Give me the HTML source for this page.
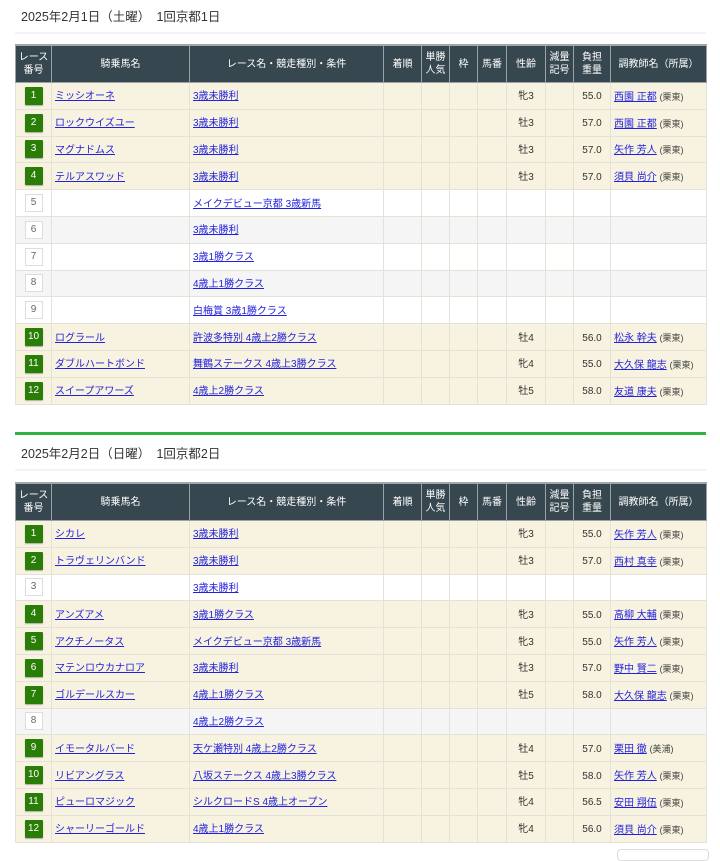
<!DOCTYPE html><html><head><meta charset="utf-8"><style>
body{margin:0;background:#fff;font-family:"Liberation Sans","Noto Sans CJK JP",sans-serif;color:#333;width:720px;height:855px;overflow:hidden;position:relative}
.t{position:absolute;left:21px;font-size:12.5px;color:#333}
.sep{position:absolute;left:15px;width:691px;height:2px;background:#f3f3f3}
table{position:absolute;left:15px;width:691px;border-collapse:collapse;table-layout:fixed;font-size:10px}
th{background:#37474f;color:#fff;font-weight:normal;height:36px;border:1px solid #9aa3a7;border-top:2px solid #a0a8ab;padding:0;line-height:13px;font-size:10px}
tr.h,tr.w,tr.g{height:26.8px}
td{border:1px solid #e3e1d8;padding:3px 3px 0;white-space:nowrap;overflow:hidden;vertical-align:middle;line-height:14px}
td.n{padding:0}
tr.h td{background:#f7f3e0}
tr.w td{background:#fff}
tr.g td{background:#f5f5f5}
td.n{text-align:center}
.b{display:inline-block;vertical-align:middle;width:18px;height:18px;line-height:18px;background:#2a7d06;color:#fff;border-radius:1px;box-shadow:0 1px 1px #aaa;font-size:10px;text-align:center}
.e{display:inline-block;vertical-align:middle;width:18px;height:18px;line-height:16px;background:#fff;color:#666;border:1px solid #ddd;font-size:10px;text-align:center;box-sizing:border-box}
a{color:#2222dd;text-decoration:underline}
td.c{text-align:center}
.s{font-size:9px;color:#444}
</style></head><body>
<div class="t" style="top:6px">2025年2月1日（土曜）　1回京都1日</div>
<div class="sep" style="top:32px"></div>
<table style="top:44px">
<colgroup><col style="width:36px"><col style="width:138px"><col style="width:194px"><col style="width:38px"><col style="width:28px"><col style="width:28px"><col style="width:29px"><col style="width:39px"><col style="width:28px"><col style="width:37px"><col style="width:96px"></colgroup>
<tr><th>レース<br>番号</th><th>騎乗馬名</th><th>レース名・競走種別・条件</th><th>着順</th><th>単勝<br>人気</th><th>枠</th><th>馬番</th><th>性齢</th><th>減量<br>記号</th><th>負担<br>重量</th><th>調教師名（所属）</th></tr>
<tr class="h"><td class="n"><span class="b">1</span></td><td><a>ミッシオーネ</a></td><td><a>3歳未勝利</a></td><td></td><td></td><td></td><td></td><td class="c">牝3</td><td></td><td class="c">55.0</td><td><a>西園 正都</a> <span class="s">(栗東)</span></td></tr>
<tr class="h"><td class="n"><span class="b">2</span></td><td><a>ロックウイズユー</a></td><td><a>3歳未勝利</a></td><td></td><td></td><td></td><td></td><td class="c">牡3</td><td></td><td class="c">57.0</td><td><a>西園 正都</a> <span class="s">(栗東)</span></td></tr>
<tr class="h"><td class="n"><span class="b">3</span></td><td><a>マグナドムス</a></td><td><a>3歳未勝利</a></td><td></td><td></td><td></td><td></td><td class="c">牡3</td><td></td><td class="c">57.0</td><td><a>矢作 芳人</a> <span class="s">(栗東)</span></td></tr>
<tr class="h"><td class="n"><span class="b">4</span></td><td><a>テルアスワッド</a></td><td><a>3歳未勝利</a></td><td></td><td></td><td></td><td></td><td class="c">牡3</td><td></td><td class="c">57.0</td><td><a>須貝 尚介</a> <span class="s">(栗東)</span></td></tr>
<tr class="w"><td class="n"><span class="e">5</span></td><td></td><td><a>メイクデビュー京都 3歳新馬</a></td><td></td><td></td><td></td><td></td><td></td><td></td><td></td><td></td></tr>
<tr class="g"><td class="n"><span class="e">6</span></td><td></td><td><a>3歳未勝利</a></td><td></td><td></td><td></td><td></td><td></td><td></td><td></td><td></td></tr>
<tr class="w"><td class="n"><span class="e">7</span></td><td></td><td><a>3歳1勝クラス</a></td><td></td><td></td><td></td><td></td><td></td><td></td><td></td><td></td></tr>
<tr class="g"><td class="n"><span class="e">8</span></td><td></td><td><a>4歳上1勝クラス</a></td><td></td><td></td><td></td><td></td><td></td><td></td><td></td><td></td></tr>
<tr class="w"><td class="n"><span class="e">9</span></td><td></td><td><a>白梅賞 3歳1勝クラス</a></td><td></td><td></td><td></td><td></td><td></td><td></td><td></td><td></td></tr>
<tr class="h"><td class="n"><span class="b">10</span></td><td><a>ログラール</a></td><td><a>許波多特別 4歳上2勝クラス</a></td><td></td><td></td><td></td><td></td><td class="c">牡4</td><td></td><td class="c">56.0</td><td><a>松永 幹夫</a> <span class="s">(栗東)</span></td></tr>
<tr class="h"><td class="n"><span class="b">11</span></td><td><a>ダブルハートボンド</a></td><td><a>舞鶴ステークス 4歳上3勝クラス</a></td><td></td><td></td><td></td><td></td><td class="c">牝4</td><td></td><td class="c">55.0</td><td><a>大久保 龍志</a> <span class="s">(栗東)</span></td></tr>
<tr class="h"><td class="n"><span class="b">12</span></td><td><a>スイープアワーズ</a></td><td><a>4歳上2勝クラス</a></td><td></td><td></td><td></td><td></td><td class="c">牡5</td><td></td><td class="c">58.0</td><td><a>友道 康夫</a> <span class="s">(栗東)</span></td></tr>
</table>
<div style="position:absolute;left:15px;top:432px;width:691px;height:3px;background:#2fb344"></div>
<div class="t" style="top:443px">2025年2月2日（日曜）　1回京都2日</div>
<div class="sep" style="top:469px"></div>
<table style="top:482px">
<colgroup><col style="width:36px"><col style="width:138px"><col style="width:194px"><col style="width:38px"><col style="width:28px"><col style="width:28px"><col style="width:29px"><col style="width:39px"><col style="width:28px"><col style="width:37px"><col style="width:96px"></colgroup>
<tr><th>レース<br>番号</th><th>騎乗馬名</th><th>レース名・競走種別・条件</th><th>着順</th><th>単勝<br>人気</th><th>枠</th><th>馬番</th><th>性齢</th><th>減量<br>記号</th><th>負担<br>重量</th><th>調教師名（所属）</th></tr>
<tr class="h"><td class="n"><span class="b">1</span></td><td><a>シカレ</a></td><td><a>3歳未勝利</a></td><td></td><td></td><td></td><td></td><td class="c">牝3</td><td></td><td class="c">55.0</td><td><a>矢作 芳人</a> <span class="s">(栗東)</span></td></tr>
<tr class="h"><td class="n"><span class="b">2</span></td><td><a>トラヴェリンバンド</a></td><td><a>3歳未勝利</a></td><td></td><td></td><td></td><td></td><td class="c">牡3</td><td></td><td class="c">57.0</td><td><a>西村 真幸</a> <span class="s">(栗東)</span></td></tr>
<tr class="w"><td class="n"><span class="e">3</span></td><td></td><td><a>3歳未勝利</a></td><td></td><td></td><td></td><td></td><td></td><td></td><td></td><td></td></tr>
<tr class="h"><td class="n"><span class="b">4</span></td><td><a>アンズアメ</a></td><td><a>3歳1勝クラス</a></td><td></td><td></td><td></td><td></td><td class="c">牝3</td><td></td><td class="c">55.0</td><td><a>高柳 大輔</a> <span class="s">(栗東)</span></td></tr>
<tr class="h"><td class="n"><span class="b">5</span></td><td><a>アクチノータス</a></td><td><a>メイクデビュー京都 3歳新馬</a></td><td></td><td></td><td></td><td></td><td class="c">牝3</td><td></td><td class="c">55.0</td><td><a>矢作 芳人</a> <span class="s">(栗東)</span></td></tr>
<tr class="h"><td class="n"><span class="b">6</span></td><td><a>マテンロウカナロア</a></td><td><a>3歳未勝利</a></td><td></td><td></td><td></td><td></td><td class="c">牡3</td><td></td><td class="c">57.0</td><td><a>野中 賢二</a> <span class="s">(栗東)</span></td></tr>
<tr class="h"><td class="n"><span class="b">7</span></td><td><a>ゴルデールスカー</a></td><td><a>4歳上1勝クラス</a></td><td></td><td></td><td></td><td></td><td class="c">牡5</td><td></td><td class="c">58.0</td><td><a>大久保 龍志</a> <span class="s">(栗東)</span></td></tr>
<tr class="g"><td class="n"><span class="e">8</span></td><td></td><td><a>4歳上2勝クラス</a></td><td></td><td></td><td></td><td></td><td></td><td></td><td></td><td></td></tr>
<tr class="h"><td class="n"><span class="b">9</span></td><td><a>イモータルバード</a></td><td><a>天ケ瀬特別 4歳上2勝クラス</a></td><td></td><td></td><td></td><td></td><td class="c">牡4</td><td></td><td class="c">57.0</td><td><a>栗田 徹</a> <span class="s">(美浦)</span></td></tr>
<tr class="h"><td class="n"><span class="b">10</span></td><td><a>リビアングラス</a></td><td><a>八坂ステークス 4歳上3勝クラス</a></td><td></td><td></td><td></td><td></td><td class="c">牡5</td><td></td><td class="c">58.0</td><td><a>矢作 芳人</a> <span class="s">(栗東)</span></td></tr>
<tr class="h"><td class="n"><span class="b">11</span></td><td><a>ピューロマジック</a></td><td><a>シルクロードS 4歳上オープン</a></td><td></td><td></td><td></td><td></td><td class="c">牝4</td><td></td><td class="c">56.5</td><td><a>安田 翔伍</a> <span class="s">(栗東)</span></td></tr>
<tr class="h"><td class="n"><span class="b">12</span></td><td><a>シャーリーゴールド</a></td><td><a>4歳上1勝クラス</a></td><td></td><td></td><td></td><td></td><td class="c">牝4</td><td></td><td class="c">56.0</td><td><a>須貝 尚介</a> <span class="s">(栗東)</span></td></tr>
</table>
<div style="position:absolute;left:617px;top:849px;width:90px;height:10px;border:1px solid #ddd;border-radius:4px"></div>
</body></html>
